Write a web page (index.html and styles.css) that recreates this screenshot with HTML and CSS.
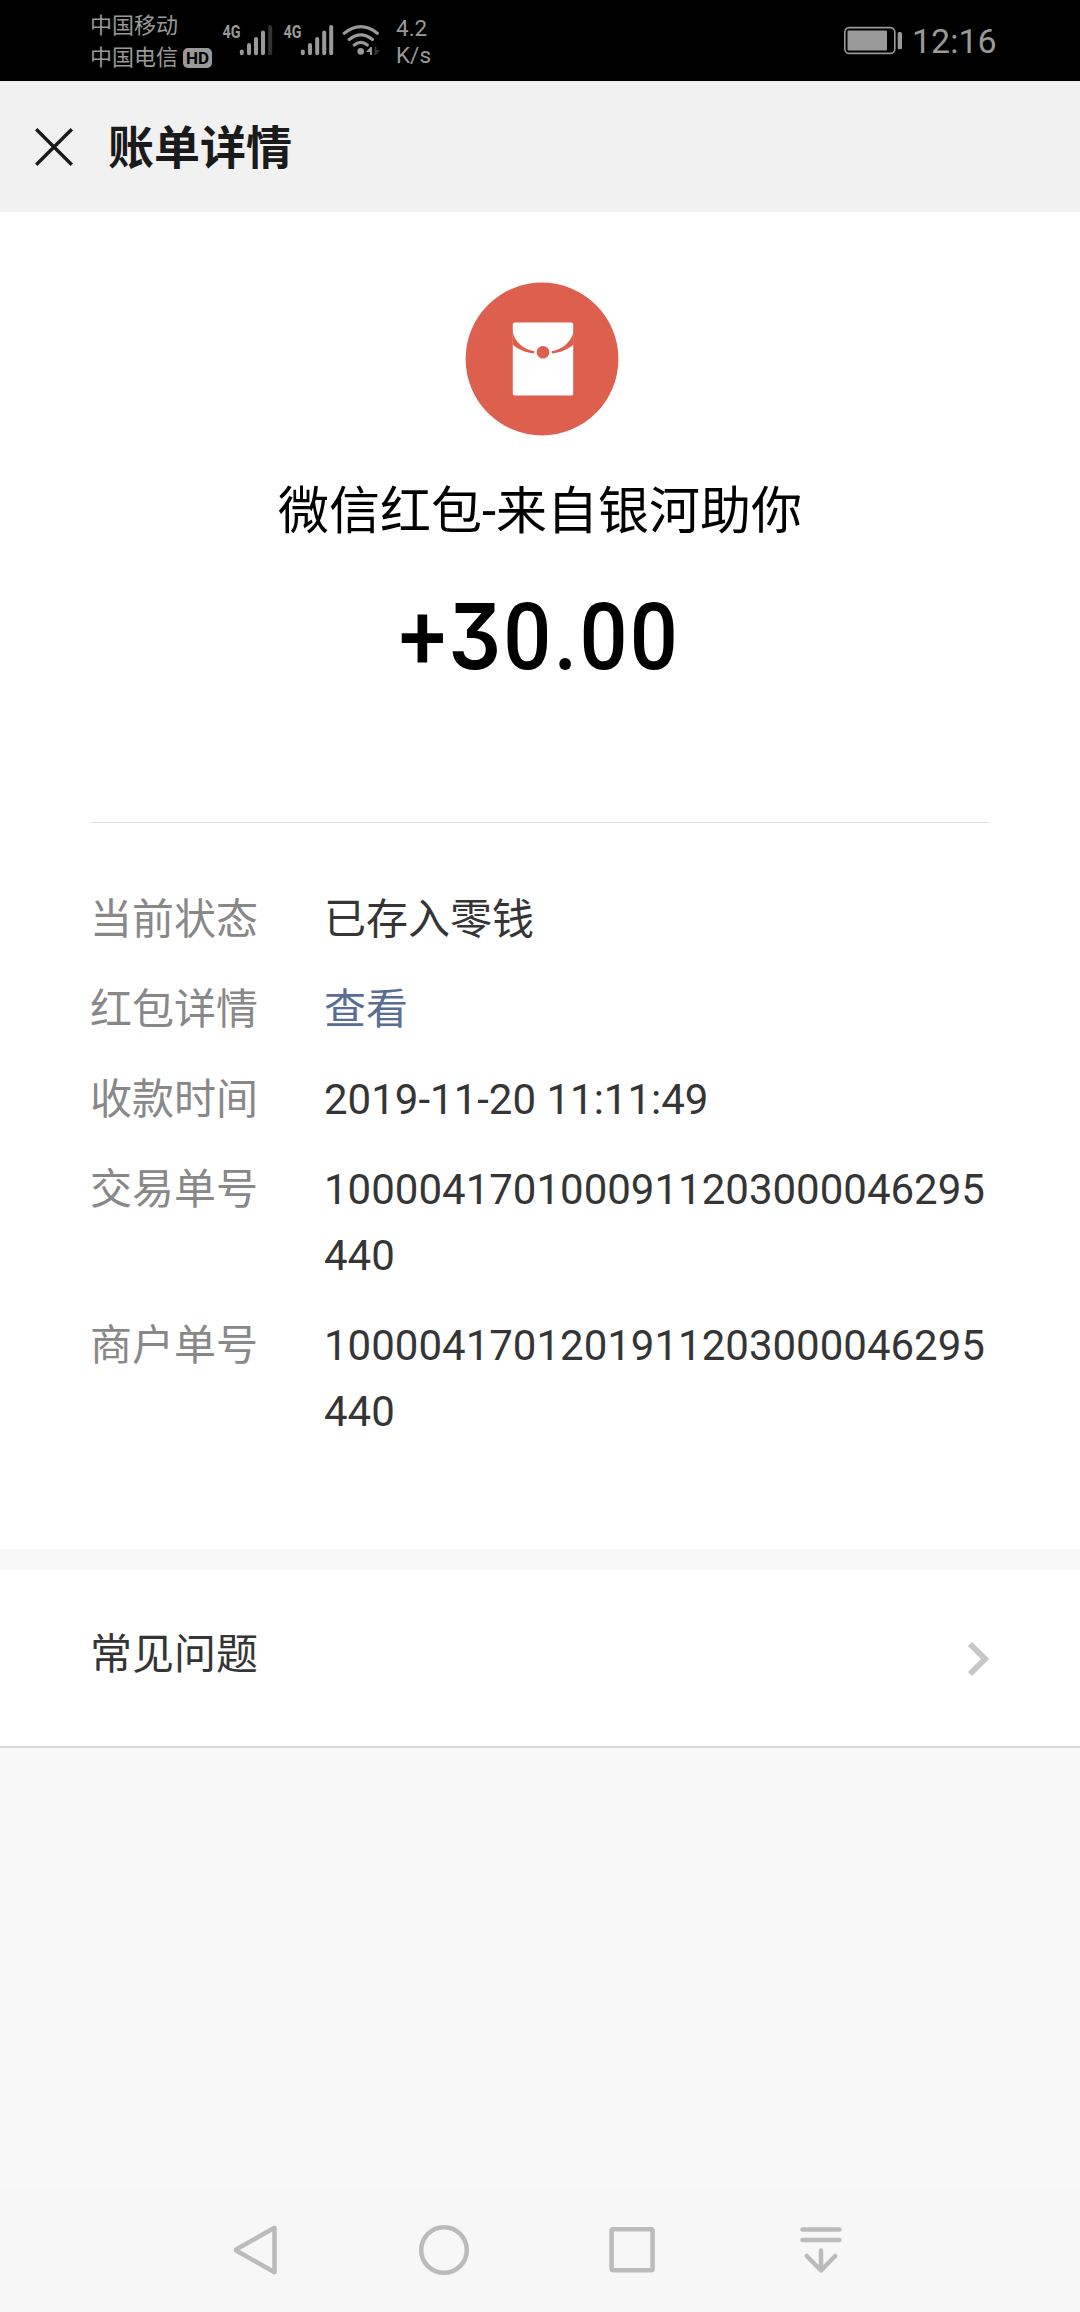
FILE: index.html
```
<!DOCTYPE html>
<html lang="zh-CN">
<head>
    <meta charset="UTF-8">
    <meta name="viewport" content="width=device-width, initial-scale=1.0">
    <title>账单详情</title>
    <link rel="stylesheet" href="styles.css">
</head>
<body>
    <!-- Status Bar -->
    <div class="status-bar">
        <div class="carriers">
            <div class="carrier">中国移动</div>
            <div class="carrier">中国电信 <span class="hd">HD</span></div>
        </div>
        <svg class="signals" width="162" height="40" viewBox="220 20 162 40">
            <g class="net">
                <text x="222.5" y="38" textLength="18" lengthAdjust="spacingAndGlyphs">4G</text>
                <text x="283.5" y="38" textLength="18" lengthAdjust="spacingAndGlyphs">4G</text>
            </g>
            <g class="bars">
                <path d="M241.8 51.4v1.8M249 45v8.2M256 39v14.2M263 32.5v20.7"/>
                <path class="dim" d="M270.2 27v26.2"/>
                <path d="M302.8 51.4v1.8M310 45v8.2M317.2 39v14.2M324.2 32.5v20.7M331.2 27v26.2"/>
            </g>
            <!-- Wifi -->
            <g class="wifi">
                <path d="M344.3 33.2Q360.8 20.2 377.3 33.2M349.2 39.6Q360.8 30.2 372.4 39.6M354.3 45Q360.8 39.8 367.3 45"/>
                <circle cx="360.7" cy="51.4" r="3.3"/>
                <path class="up" d="M366 52l4.5-5h1.5v8h-2v-3z"/>
                <path class="down" d="M374.5 47h2v3h3.5l-4 5h-1.5z"/>
            </g>
        </svg>
        <div class="speed">4.2<br>K/s</div>
        <svg class="battery" width="60" height="30" viewBox="843 26 60 30">
            <rect class="shell" x="844.8" y="27.6" width="50" height="25.8" rx="4.5"/>
            <rect class="level" x="847.5" y="30.5" width="39.5" height="20" rx="1"/>
            <rect class="level" x="897.7" y="32" width="4.3" height="17.2" rx="1.5"/>
        </svg>
        <div class="clock">12:16</div>
    </div>

    <!-- Header -->
    <header class="header">
        <svg class="close" width="38" height="38" viewBox="0 0 38 38">
            <path d="M1.2 1.2L36.8 36.8M36.8 1.2L1.2 36.8"/>
        </svg>
        <h1>账单详情</h1>
    </header>

    <section class="bill">
        <svg class="packet" width="154" height="154" viewBox="0 0 154 154">
            <circle class="red" cx="77" cy="77" r="76.4"/>
            <rect class="paper" x="47.8" y="40.4" width="60.4" height="73" rx="2"/>
            <path class="red" d="M47.6 49C49 59 58 67.5 69.500 69.2L69 71.6C60 70.5 52.5 67 47.6 62.5zM108.4 49C107 59 98 67.5 86.5 69.2L87 71.6C96 70.5 103.500 67 108.4 62.5z"/>
            <circle class="red" cx="78" cy="70.3" r="6.3"/>
        </svg>
        <h2>微信红包-来自银河助你</h2>
        <div class="amount">+<span class="three">3</span>0.00</div>

        <dl class="details">
            <dt>当前状态</dt>
            <dd>已存入零钱</dd>
            <dt>红包详情</dt>
            <dd><a class="link">查看</a></dd>
            <dt>收款时间</dt>
            <dd>2019-11-20 11:11:49</dd>
            <dt>交易单号</dt>
            <dd>1000041701000911203000046295440</dd>
            <dt>商户单号</dt>
            <dd>1000041701201911203000046295440</dd>
        </dl>
    </section>

    <section class="faq">
        <span class="faq-title">常见问题</span>
        <svg class="arrow" width="24" height="36" viewBox="0 0 24 36">
            <path d="M3 3L18 18L3 33"/>
        </svg>
    </section>

    <!-- Navigation Bar -->
    <nav class="nav-bar">
        <svg width="54" height="54" viewBox="0 0 54 54">
            <path d="M45.5 4.8V49.2L7.5 27.8Q6.2 27 7.5 26.2z"/>
        </svg>
        <svg width="54" height="54" viewBox="0 0 54 54">
            <circle cx="27" cy="27" r="22.8"/>
        </svg>
        <svg width="54" height="54" viewBox="0 0 54 54">
            <rect x="5.6" y="6.2" width="41" height="41" rx="1.5"/>
        </svg>
        <svg width="54" height="54" viewBox="0 0 54 54">
            <path d="M8.5 6.5H45.5M8.5 17H45.5M27 27.5V47M12.8 33L27 47.5L41.2 33"/>
        </svg>
    </nav>
</body>
</html>
```
FILE: styles.css
```
* {
    box-sizing: border-box;
}

body {
    margin: 0;
    min-height: 2312px;
    display: flex;
    flex-direction: column;
    font-family: Roboto, "Noto Sans CJK SC", sans-serif;
    background-color: #f8f8f8;
    color: #353535;
}

svg {
    display: block;
    flex: none;
}

h1,
h2,
dl,
dd {
    margin: 0;
}

/* Status bar */
.status-bar {
    display: flex;
    height: 81px;
    padding-left: 90px;
    background-color: #000;
    color: #999;
}

.carriers {
    width: 130px;
    padding-top: 10px;
    font-size: 22px;
    line-height: 32px;
}

.carrier {
    display: flex;
    align-items: center;
    gap: 5px;
    height: 32px;
    white-space: nowrap;
}

.hd {
    width: 29px;
    height: 20px;
    border-radius: 5px;
    background-color: #999;
    color: #000;
    font-size: 17px;
    font-weight: 700;
    line-height: 20px;
    text-align: center;
}

.signals {
    margin-top: 20px;
}

.net text {
    font-size: 18px;
    font-weight: 700;
    fill: #999;
}

.bars path {
    stroke: #999;
    stroke-width: 4;
    stroke-linecap: round;
}

.bars .dim {
    stroke: #333;
}

.wifi path {
    fill: none;
    stroke: #999;
    stroke-width: 3.2;
    stroke-linecap: round;
}

.wifi circle,
.level {
    fill: #999;
}

.wifi .up {
    fill: #999;
    stroke: none;
}

.wifi .down {
    fill: #333;
    stroke: none;
}

.speed {
    margin-left: 14px;
    padding-top: 15px;
    font-size: 22.5px;
    line-height: 27px;
}

.battery {
    margin: 26px 9px 0 auto;
}

.shell {
    fill: none;
    stroke: #999;
    stroke-width: 1.6;
}

.clock {
    width: 168px;
    font-size: 34px;
    line-height: 82px;
}

/* Header */
.header {
    display: flex;
    align-items: center;
    gap: 35px;
    height: 131px;
    padding: 0 35px;
    background-color: #f1f1f1;
    color: #1a1a1a;
}

.close path {
    stroke: #1a1a1a;
    stroke-width: 3.4;
}

.header h1 {
    padding-top: 2px;
    font-size: 46px;
    font-weight: 700;
    line-height: 60px;
}

/* Bill */
.bill {
    display: flex;
    flex-direction: column;
    align-items: center;
    height: 1337px;
    padding: 70px 90px 0;
    background-color: #fff;
}

.packet {
    margin-left: 3px;
}

.red {
    fill: #dd5f4d;
}

.paper {
    fill: #fff;
}

.bill h2 {
    margin-top: 40px;
    font-size: 51px;
    font-weight: 400;
    line-height: 72px;
    color: #000;
}

.amount {
    height: 120px;
    margin-top: 30px;
    font-size: 93px;
    font-weight: 500;
    line-height: 120px;
    letter-spacing: 2.5px;
    color: #000;
    transform: scaleX(0.91);
}

.three {
    font-family: Inter, sans-serif;
    font-size: 91px;
    font-weight: 600;
    font-feature-settings: "cv09";
    line-height: 1;
}

.details {
    display: grid;
    grid-template-columns: 234px 666px;
    row-gap: 24px;
    width: 900px;
    margin-top: 124px;
    padding-top: 64px;
    border-top: 1px solid #e0e0e0;
    font-size: 42px;
    line-height: 66px;
}

.details dt {
    color: #888;
}

.details dd {
    word-break: break-all;
}

.link {
    color: #586c94;
}

/* FAQ */
.faq {
    display: flex;
    align-items: center;
    justify-content: space-between;
    height: 178px;
    margin-top: 21px;
    padding: 2px 89px 0 90px;
    border-bottom: 2px solid #d9d9d9;
    background-color: #fff;
    font-size: 42px;
}

.faq-title {
    padding-bottom: 17px;
}

.arrow path {
    fill: none;
    stroke: #c7c7cb;
    stroke-width: 6;
}

/* Navigation bar */
.nav-bar {
    display: flex;
    justify-content: space-between;
    align-items: center;
    height: 124px;
    margin-top: auto;
    padding: 0 232px 0 229px;
    background-color: #f7f7f7;
}

.nav-bar svg {
    fill: none;
    stroke: #bbb;
    stroke-width: 4.5;
    stroke-linecap: round;
    stroke-linejoin: round;
}
```
